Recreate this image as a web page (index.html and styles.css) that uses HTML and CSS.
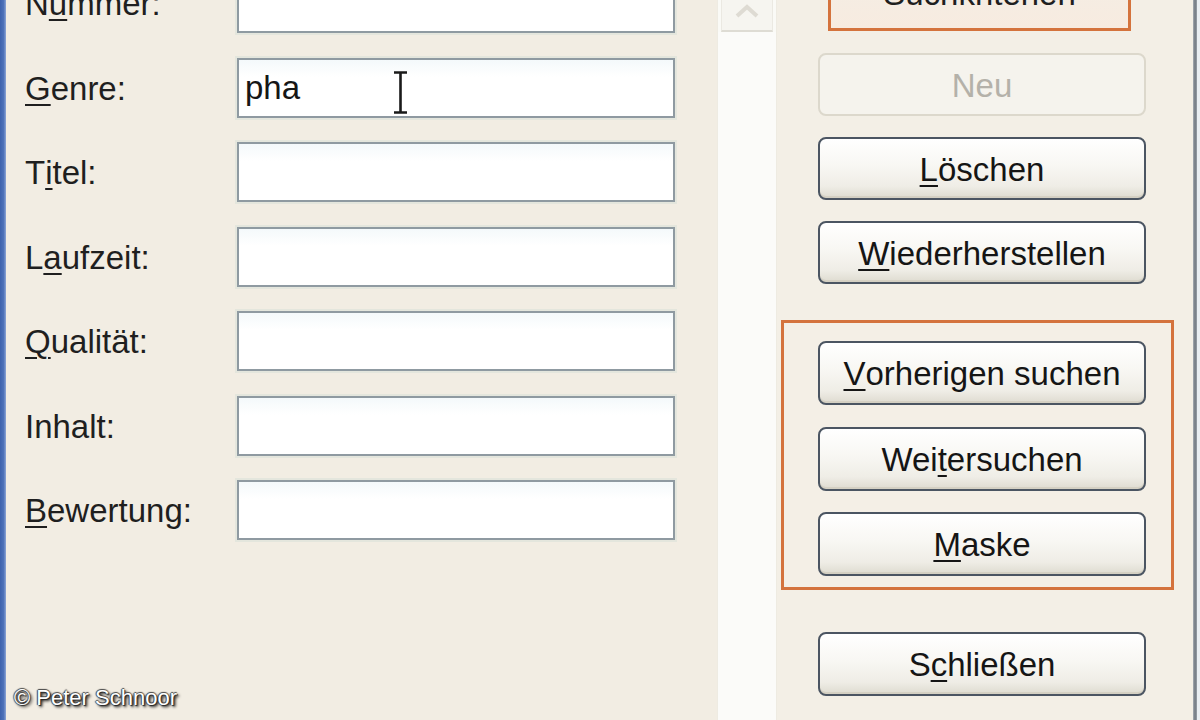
FILE: index.html
```html
<!DOCTYPE html>
<html lang="de">
<head>
<meta charset="utf-8">
<title>Suchen</title>
<link rel="stylesheet" href="styles.css">
</head>
<body>
<div class="screen">
  <div class="frame-left"></div>
  <div class="form">
    <div class="lbl">N<u>u</u>mmer:</div><div class="field"></div>
    <div class="lbl"><u>G</u>enre:</div>
    <div class="field focus">pha
      <svg class="ibeam" viewBox="0 0 17 43" width="17" height="43"><path d="M2 1.5h13M8.5 1.5v40M2 41.5h13" fill="none" stroke="#1a1a1a" stroke-width="2.6"/></svg>
    </div>
    <div class="lbl">T<u>i</u>tel:</div><div class="field"></div>
    <div class="lbl">L<u>a</u>ufzeit:</div><div class="field"></div>
    <div class="lbl"><u>Q</u>ualität:</div><div class="field"></div>
    <div class="lbl">Inhalt:</div><div class="field"></div>
    <div class="lbl"><u>B</u>ewertung:</div><div class="field"></div>
  </div>
  <div class="scroll">
    <div class="scroll-btn">
      <svg viewBox="0 0 50 30" width="50" height="30"><path d="M15 16l10-9 10 9" fill="none" stroke="#dedbd3" stroke-width="4"/></svg>
    </div>
    <div class="scroll-track"></div>
  </div>
  <div class="panel">
    <div class="crit">Suchkriterien</div>
    <div class="btn disabled first">Neu</div>
    <div class="btn"><u>L</u>öschen</div>
    <div class="btn"><u>W</u>iederherstellen</div>
    <div class="group">
      <div class="btn tall gfirst"><u>V</u>orherigen suchen</div>
      <div class="btn tall">Wei<u>t</u>ersuchen</div>
      <div class="btn tall"><u>M</u>aske</div>
    </div>
    <div class="btn tall close">S<u>c</u>hließen</div>
  </div>
  <div class="edge"><div class="edge-line"></div><div class="edge-out"></div></div>
  <div class="credit">© Peter Schnoor</div>
</div>
</body>
</html>
```

FILE: styles.css
```css
html, body {
  margin: 0;
  padding: 0;
  width: 1200px;
  height: 720px;
  overflow: hidden;
  background: #f2ede3;
}

.screen {
  position: relative;
  display: flex;
  width: 1200px;
  height: 720px;
  overflow: hidden;
  background: #f2ede3;
  font-family: "Liberation Sans", Arial, sans-serif;
  font-size: 33px;
  color: #1f1f1f;
}

u {
  text-decoration: underline;
  text-decoration-thickness: 2px;
  text-underline-offset: 4px;
}

.frame-left {
  flex: 0 0 6px;
  background: linear-gradient(90deg, #3e62ad 0, #4f72b9 60%, #8ea6d6 100%);
}

.form {
  flex: 0 0 692px;
  padding-left: 19px;
  margin-top: -27px;
  display: grid;
  grid-template-columns: 212px 438px;
  grid-auto-rows: 60px;
  row-gap: 24.5px;
  align-content: start;
}

.lbl {
  display: flex;
  align-items: center;
  white-space: nowrap;
  padding-top: 2px;
}

.field {
  position: relative;
  box-sizing: border-box;
  border: 2px solid #8f9aa1;
  background: linear-gradient(#f4f9fb 0, #ffffff 30%, #ffffff 100%);
  box-shadow: 0 0 0 2px rgba(222, 226, 218, 0.7);
  display: flex;
  align-items: center;
  padding-left: 6px;
  color: #161616;
}

.ibeam {
  position: absolute;
  left: 153px;
  top: 11px;
}

.scroll {
  flex: 0 0 58px;
  display: flex;
  flex-direction: column;
  background: #fafaf6;
  border-left: 1px solid #eeebe2;
  border-right: 1px solid #eeebe2;
  box-sizing: border-box;
}

.scroll-btn {
  height: 30px;
  margin: 0 3px;
  border: 1px solid #ebe9e2;
  border-top: none;
  border-bottom: 2px solid #dedcd4;
  background: #f6f5f0;
  display: flex;
  justify-content: center;
}

.scroll-track {
  flex: 1;
  background: #fbfbf9;
}

.panel {
  flex: 0 0 416px;
  box-sizing: border-box;
  padding-left: 41px;
  display: flex;
  flex-direction: column;
  align-items: flex-start;
  background: #f3efe6;
}

.crit {
  box-sizing: border-box;
  width: 303px;
  height: 70px;
  margin-top: -39px;
  margin-left: 10px;
  border: 3px solid #d4733d;
  background: linear-gradient(#f3eee5, #f7ebe0);
  display: flex;
  justify-content: center;
  align-items: center;
  padding-bottom: 4px;
  white-space: nowrap;
}

.btn {
  box-sizing: border-box;
  width: 328px;
  height: 63px;
  margin-top: 21px;
  border: 2px solid #4b5562;
  border-radius: 8px;
  background: linear-gradient(#ffffff 0, #f8f7f3 45%, #efede6 80%, #dedbd0 100%);
  box-shadow: inset 0 -2px 0 rgba(205, 200, 185, 0.6);
  display: flex;
  justify-content: center;
  align-items: center;
  padding-top: 2px;
  white-space: nowrap;
  color: #151515;
}

.btn.first {
  margin-top: 22px;
}

.btn.disabled {
  border-color: #dcd8cc;
  background: #f5f3ed;
  box-shadow: none;
  color: #b4b1a9;
}

.btn.tall {
  height: 64px;
}

.group {
  box-sizing: border-box;
  width: 393px;
  margin-left: -37px;
  margin-top: 36px;
  border: 3px solid #d4733d;
  padding: 0 0 11px 34px;
  background: #f4efe6;
}

.group .btn {
  margin-top: 21.5px;
}

.group .btn.gfirst {
  margin-top: 18px;
}

.btn.close {
  margin-top: 42px;
}

.edge {
  flex: 0 0 9px;
  display: flex;
}

.edge-line {
  flex: 0 0 4px;
  background: linear-gradient(90deg, #a9afb5, #6f7780 50%, #9aa1a8);
}

.edge-out {
  flex: 1;
  background: #e9eef2;
}

.credit {
  position: absolute;
  left: 14px;
  top: 685px;
  font-family: "Liberation Sans", Arial, sans-serif;
  font-size: 22px;
  color: #ffffff;
  text-shadow: 1px 1px 1px #222, -1px 0 1px #444, 0 -1px 1px #444, 2px 2px 3px #000;
  white-space: nowrap;
}
```
